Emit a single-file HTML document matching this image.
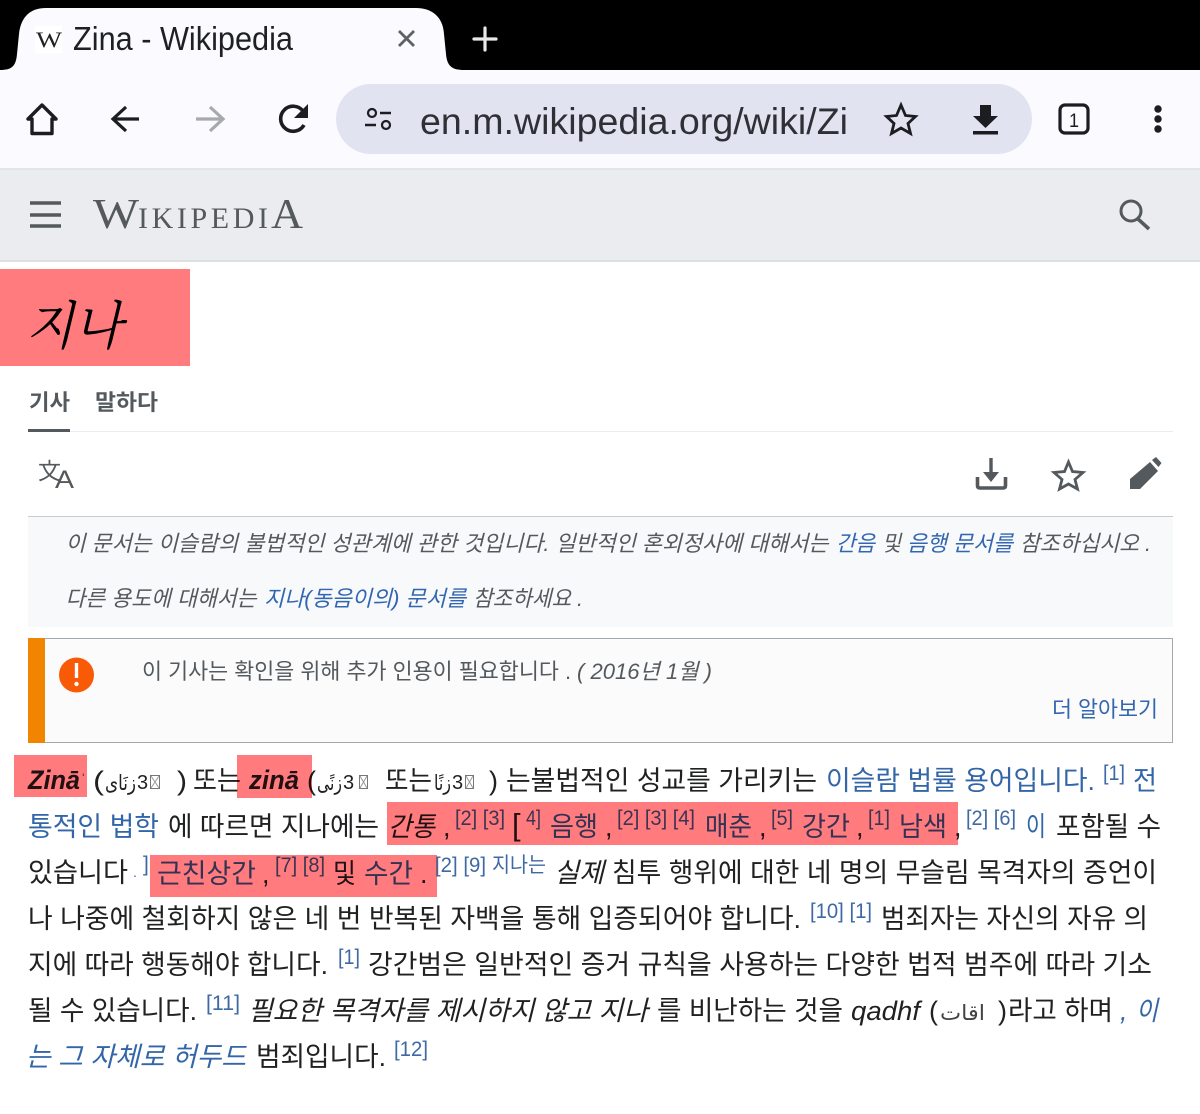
<!DOCTYPE html>
<html lang="ko"><head><meta charset="utf-8"><title>Zina - Wikipedia</title>
<style>
html,body{margin:0;padding:0;background:#fff;width:1200px;height:1114px;overflow:hidden}
svg{position:absolute;left:0;top:0;display:block}
text{font-family:"Liberation Sans","Noto Sans CJK KR","DejaVu Sans",sans-serif;white-space:pre}
.b text{font-size:27px;fill:#202122}
.b .l,.l{fill:#3366a8}
.i{font-style:italic}
.s{font-size:21px!important;fill:#3f69a5!important}
.n text{font-size:22px;fill:#54595d}
.n .l{fill:#3366b0}
.ar{font-family:"DejaVu Sans",sans-serif!important;font-size:21px!important}
</style></head><body>
<svg width="1200" height="1114" viewBox="0 0 1200 1114" xmlns="http://www.w3.org/2000/svg">
<rect width="1200" height="1114" fill="#fff"/>
<!-- browser chrome -->
<rect width="1200" height="70" fill="#000"/>
<rect y="70" width="1200" height="98" fill="#fafaff"/>
<path d="M0 70C12 70 16 66 17 54L19 34C21 16 31 8 46 8H416C431 8 443 16 444 34L446 54C447 66 452 70 464 70Z" fill="#fafaff"/>
<rect x="35" y="26" width="27" height="27" fill="#fff"/>
<text x="36" y="47" font-size="22" textLength="26" lengthAdjust="spacingAndGlyphs" style="font-family:'Liberation Serif',serif" fill="#222">W</text>
<text x="73" y="50" font-size="33" textLength="220" lengthAdjust="spacingAndGlyphs" fill="#1f2024">Zina - Wikipedia</text>
<path d="M399 31L414 46M414 31L399 46" stroke="#5f6165" stroke-width="2.800" fill="none"/>
<path d="M485 28V50M474 39H496" stroke="#e8e8e8" stroke-width="3.200" stroke-linecap="round" fill="none"/>
<!-- toolbar icons -->
<path d="M42 105L28 119H32V133.500H52V119H56Z" fill="none" stroke="#1c1d21" stroke-width="3.400" stroke-linejoin="round"/>
<path d="M139 119H114M126 107L113 119L126 131" fill="none" stroke="#1c1d21" stroke-width="3.200"/>
<path d="M196 119H222M210 107L223 119L210 131" fill="none" stroke="#a8a9ad" stroke-width="3.200"/>
<path d="M304 125A12.500 12.500 0 1 1 303 111" fill="none" stroke="#1c1d21" stroke-width="3.600"/>
<path d="M308 104V118H294Z" fill="#1c1d21"/>
<rect x="336" y="84" width="696" height="70" rx="35" fill="#e1e4f0"/>
<circle cx="372" cy="113" r="4" fill="none" stroke="#1c1d21" stroke-width="2.200"/>
<path d="M380 113H391M365 125H376" stroke="#1c1d21" stroke-width="2.400"/>
<circle cx="386" cy="125" r="4" fill="none" stroke="#1c1d21" stroke-width="2.200"/>
<text x="420" y="134" font-size="37" textLength="428" lengthAdjust="spacingAndGlyphs" fill="#2f3036">en.m.wikipedia.org/wiki/Zi</text>
<path d="M901 105L905.500 115.500L915.500 116.500L908 123.500L910.500 133.500L901 128L891.500 133.500L894 123.500L886.500 116.500L896.500 115.500Z" fill="none" stroke="#1c1d21" stroke-width="2.800" stroke-linejoin="miter"/>
<path d="M980 105H991V116H998L985.500 128L973 116H980Z" fill="#1c1d21"/>
<rect x="973" y="131" width="25" height="3.500" fill="#1c1d21"/>
<rect x="1060" y="105" width="28" height="28" rx="5" fill="none" stroke="#1c1d21" stroke-width="3.200"/>
<text x="1069" y="127" font-size="19" textLength="10" lengthAdjust="spacingAndGlyphs" fill="#1c1d21">1</text>
<circle cx="1158" cy="109" r="3.700" fill="#1c1d21"/><circle cx="1158" cy="119" r="3.700" fill="#1c1d21"/><circle cx="1158" cy="129" r="3.700" fill="#1c1d21"/>
<!-- wiki header -->
<rect y="168" width="1200" height="94" fill="#eaecf0"/>
<rect y="168" width="1200" height="2" fill="#e2e4e8"/>
<rect y="260" width="1200" height="2" fill="#dde0e2"/>
<path d="M30 203H61M30 215H61M30 226H61" stroke="#54595d" stroke-width="3.600" fill="none"/>
<g fill="#54595d">
<text x="93" y="228" style="font-family:'Liberation Serif',serif" font-size="42" textLength="46" lengthAdjust="spacingAndGlyphs">W</text>
<text x="138" y="228" style="font-family:'Liberation Serif',serif" font-size="30" textLength="130" lengthAdjust="spacing">IKIPEDI</text>
<text x="271" y="228" style="font-family:'Liberation Serif',serif" font-size="42" textLength="32" lengthAdjust="spacingAndGlyphs">A</text>
</g>
<circle cx="1131" cy="211" r="10" fill="none" stroke="#54595d" stroke-width="3"/>
<path d="M1138 219L1149 229" stroke="#54595d" stroke-width="3.600"/>
<!-- title and tabs -->
<text x="26" y="344" font-size="52" textLength="96" lengthAdjust="spacingAndGlyphs" fill="#000" style="font-family:'Noto Serif CJK SC','Noto Sans CJK KR',serif;font-style:italic">지나</text>
<text x="29" y="410" font-size="22" font-weight="700" textLength="41" lengthAdjust="spacingAndGlyphs" fill="#54595d">기사</text>
<text x="95" y="410" font-size="22" font-weight="700" textLength="63" lengthAdjust="spacingAndGlyphs" fill="#54595d">말하다</text>
<rect x="28" y="431" width="1145" height="1" fill="#eaecf0"/>
<rect x="28" y="429" width="42" height="3" fill="#54595d"/>
<!-- page action icons -->
<text x="38" y="479" font-size="23" fill="#54595d" style="font-family:'Noto Sans CJK KR',sans-serif">文</text>
<text x="55" y="488" font-size="25" fill="#54595d" textLength="19" lengthAdjust="spacingAndGlyphs">A</text>
<path d="M991 458V476" stroke="#54595d" stroke-width="3.400"/>
<path d="M983 472H999L991 482Z" fill="#54595d"/>
<path d="M977.500 477V485.500Q977.500 488 980 488H1003Q1005.500 488 1005.500 485.500V477" fill="none" stroke="#54595d" stroke-width="3.600"/>
<path d="M1068.500 462L1072.500 471.500L1083 472.500L1075 479.500L1077.500 489L1068.500 484L1059.500 489L1062 479.500L1054 472.500L1064.500 471.500Z" fill="none" stroke="#54595d" stroke-width="2.800"/>
<path d="M1130 489V479L1150 462L1158 471L1140 489Z" fill="#54595d"/>
<path d="M1152 460L1156 457L1161.500 463L1158.500 467Z" fill="#54595d"/>
<!-- hatnote -->
<rect x="28" y="516" width="1145" height="111" fill="#f8f9fa"/>
<rect x="28" y="516" width="1145" height="1" fill="#c8ccd1"/>
<g class="n">
<text class="i" x="65.500" y="551" textLength="763" lengthAdjust="spacingAndGlyphs">이 문서는 이슬람의 불법적인 성관계에 관한 것입니다. 일반적인 혼외정사에 대해서는</text>
<text class="i l" x="836" y="551" textLength="39" lengthAdjust="spacingAndGlyphs">간음</text>
<text class="i" x="882" y="551" textLength="19" lengthAdjust="spacingAndGlyphs">및</text>
<text class="i l" x="907" y="551" textLength="106" lengthAdjust="spacingAndGlyphs">음행 문서를</text>
<text class="i" x="1020" y="551" textLength="131" lengthAdjust="spacingAndGlyphs">참조하십시오 .</text>
<text class="i" x="65.500" y="606" textLength="191" lengthAdjust="spacingAndGlyphs">다른 용도에 대해서는</text>
<text class="i l" x="264" y="606" textLength="202" lengthAdjust="spacingAndGlyphs">지나(동음이의) 문서를</text>
<text class="i" x="473" y="606" textLength="110" lengthAdjust="spacingAndGlyphs">참조하세요 .</text>
</g>
<!-- ambox -->
<rect x="28.500" y="638.500" width="1144" height="104" fill="#fbfbfb" stroke="#a2a9b1"/>
<rect x="28" y="638" width="17" height="105" fill="#f28500"/>
<ellipse cx="76.500" cy="675" rx="17.500" ry="17.500" fill="#f95a06"/>
<path d="M76.500 663V678" stroke="#fff" stroke-width="3.400"/>
<circle cx="76.500" cy="684" r="2.200" fill="#fff"/>
<g class="n">
<text x="142" y="679" textLength="429" lengthAdjust="spacingAndGlyphs">이 기사는 확인을 위해 추가 인용이 필요합니다 .</text>
<text class="i" x="577" y="679" textLength="135" lengthAdjust="spacingAndGlyphs">( 2016년 1월 )</text>
<text class="l" x="1052" y="717" textLength="106" lengthAdjust="spacingAndGlyphs">더 알아보기</text>
</g>
<!-- body -->
<g class="b">
<!-- line 1 -->
<text class="i" x="28" y="789" textLength="52" lengthAdjust="spacingAndGlyphs" style="font-weight:700">Zinā</text>
<text x="81" y="784" style="font-size:14px">ʾ</text>
<text x="93" y="790" textLength="11" lengthAdjust="spacingAndGlyphs">(</text>
<text class="ar" x="105" y="790" textLength="31" lengthAdjust="spacingAndGlyphs">زنَاى</text>
<text x="137" y="789" style="font-size:20px">3</text>
<rect x="150.500" y="775.500" width="9" height="13" fill="none" stroke="#777"/><path d="M151 776L159 788M159 776L151 788" stroke="#999"/>
<text x="177" y="790" textLength="10" lengthAdjust="spacingAndGlyphs">)</text>
<text x="193" y="790" textLength="48" lengthAdjust="spacingAndGlyphs">또는</text>
<text class="i" x="249" y="789" textLength="50" lengthAdjust="spacingAndGlyphs" style="font-weight:700">zinā</text>
<text x="307" y="790" textLength="9" lengthAdjust="spacingAndGlyphs">(</text>
<text class="ar" x="317" y="790" textLength="25" lengthAdjust="spacingAndGlyphs">زنًى</text>
<text x="343" y="789" style="font-size:20px">3</text>
<rect x="359.500" y="775.500" width="8" height="13" fill="none" stroke="#777"/><path d="M360 776L367 788M367 776L360 788" stroke="#999"/>
<text x="385" y="790" textLength="47" lengthAdjust="spacingAndGlyphs">또는</text>
<text class="ar" x="434" y="790" textLength="17" lengthAdjust="spacingAndGlyphs">زنًا</text>
<text x="452" y="789" style="font-size:20px">3</text>
<rect x="465.500" y="775.500" width="8" height="13" fill="none" stroke="#777"/><path d="M466 776L473 788M473 776L466 788" stroke="#999"/>
<text x="489" y="790" textLength="9" lengthAdjust="spacingAndGlyphs">)</text>
<text x="506" y="790" textLength="311" lengthAdjust="spacingAndGlyphs">는불법적인 성교를 가리키는</text>
<text class="l" x="826" y="790" textLength="269" lengthAdjust="spacingAndGlyphs">이슬람 법률 용어입니다.</text>
<text class="s" x="1103" y="780" textLength="22" lengthAdjust="spacingAndGlyphs">[1]</text>
<text class="l" x="1133" y="790" textLength="24" lengthAdjust="spacingAndGlyphs">전</text>
<!-- line 2 -->
<text class="l" x="28" y="836" textLength="131" lengthAdjust="spacingAndGlyphs">통적인 법학</text>
<text x="168" y="836" textLength="211" lengthAdjust="spacingAndGlyphs">에 따르면 지나에는</text>
<text class="i" x="388" y="836" textLength="47" lengthAdjust="spacingAndGlyphs">간통</text>
<text x="443" y="836">,</text>
<text class="s" x="455" y="825" textLength="50" lengthAdjust="spacingAndGlyphs">[2] [3]</text>
<text x="512" y="835" style="font-size:31px">[</text>
<text class="s" x="526" y="825" textLength="15" lengthAdjust="spacingAndGlyphs">4]</text>
<text class="l" x="550" y="836" textLength="48" lengthAdjust="spacingAndGlyphs">음행</text>
<text x="605" y="836">,</text>
<text class="s" x="617" y="825" textLength="78" lengthAdjust="spacingAndGlyphs">[2] [3] [4]</text>
<text class="l" x="705" y="836" textLength="47" lengthAdjust="spacingAndGlyphs">매춘</text>
<text x="759" y="836">,</text>
<text class="s" x="771" y="825" textLength="22" lengthAdjust="spacingAndGlyphs">[5]</text>
<text class="l" x="802" y="836" textLength="48" lengthAdjust="spacingAndGlyphs">강간</text>
<text x="856" y="836">,</text>
<text class="s" x="868" y="825" textLength="22" lengthAdjust="spacingAndGlyphs">[1]</text>
<text class="l" x="899" y="836" textLength="48" lengthAdjust="spacingAndGlyphs">남색</text>
<text x="954" y="836">,</text>
<text class="s" x="966" y="825" textLength="50" lengthAdjust="spacingAndGlyphs">[2] [6]</text>
<text class="l" x="1026" y="836" textLength="20" lengthAdjust="spacingAndGlyphs">이</text>
<text x="1056" y="836" textLength="105" lengthAdjust="spacingAndGlyphs">포함될 수</text>
<!-- line 3 -->
<text x="28" y="882" textLength="100" lengthAdjust="spacingAndGlyphs">있습니다</text>
<text class="s" x="133" y="877" style="font-size:14px!important">.</text>
<text class="s" x="143" y="871">]</text>
<text class="l" x="157" y="883" textLength="99" lengthAdjust="spacingAndGlyphs">근친상간</text>
<text x="262" y="883">,</text>
<text class="s" x="275" y="872" textLength="50" lengthAdjust="spacingAndGlyphs">[7] [8]</text>
<text x="333" y="883" textLength="23" lengthAdjust="spacingAndGlyphs">및</text>
<text class="l" x="364" y="883" textLength="49" lengthAdjust="spacingAndGlyphs">수간</text>
<text x="420" y="883">.</text>
<text class="s" x="435" y="872" textLength="51" lengthAdjust="spacingAndGlyphs">[2] [9]</text>
<text class="s" x="492" y="872" textLength="54" lengthAdjust="spacingAndGlyphs">지나는</text>
<text class="i" x="554" y="882" textLength="50" lengthAdjust="spacingAndGlyphs">실제</text>
<text x="612" y="882" textLength="545" lengthAdjust="spacingAndGlyphs">침투 행위에 대한 네 명의 무슬림 목격자의 증언이</text>
<!-- line 4 -->
<text x="28" y="928" textLength="773" lengthAdjust="spacingAndGlyphs">나 나중에 철회하지 않은 네 번 반복된 자백을 통해 입증되어야 합니다.</text>
<text class="s" x="810" y="918" textLength="62" lengthAdjust="spacingAndGlyphs">[10] [1]</text>
<text x="881" y="928" textLength="267" lengthAdjust="spacingAndGlyphs">범죄자는 자신의 자유 의</text>
<!-- line 5 -->
<text x="28" y="974" textLength="300" lengthAdjust="spacingAndGlyphs">지에 따라 행동해야 합니다.</text>
<text class="s" x="338" y="964" textLength="22" lengthAdjust="spacingAndGlyphs">[1]</text>
<text x="368" y="974" textLength="784" lengthAdjust="spacingAndGlyphs">강간범은 일반적인 증거 규칙을 사용하는 다양한 법적 범주에 따라 기소</text>
<!-- line 6 -->
<text x="28" y="1020" textLength="169" lengthAdjust="spacingAndGlyphs">될 수 있습니다.</text>
<text class="s" x="206" y="1010" textLength="34" lengthAdjust="spacingAndGlyphs">[11]</text>
<text class="i" x="248" y="1020" textLength="400" lengthAdjust="spacingAndGlyphs">필요한 목격자를 제시하지 않고 지나</text>
<text x="657" y="1020" textLength="186" lengthAdjust="spacingAndGlyphs">를 비난하는 것을</text>
<text class="i" x="851" y="1020" textLength="69" lengthAdjust="spacingAndGlyphs">qadhf</text>
<text x="929" y="1020" textLength="9" lengthAdjust="spacingAndGlyphs">(</text>
<text class="ar" x="940" y="1020" style="fill:#444" textLength="45" lengthAdjust="spacingAndGlyphs">اقات</text>
<text x="998" y="1020" textLength="9" lengthAdjust="spacingAndGlyphs">)</text>
<text x="1008" y="1020" textLength="105" lengthAdjust="spacingAndGlyphs">라고 하며</text>
<text class="i l" x="1120" y="1020">,</text>
<text class="i l" x="1136" y="1020" textLength="22" lengthAdjust="spacingAndGlyphs">이</text>
<!-- line 7 -->
<text class="i l" x="26" y="1066" textLength="220" lengthAdjust="spacingAndGlyphs">는 그 자체로 허두드</text>
<text x="256" y="1066" textLength="130" lengthAdjust="spacingAndGlyphs">범죄입니다.</text>
<text class="s" x="394" y="1056" textLength="34" lengthAdjust="spacingAndGlyphs">[12]</text>
</g>
<!-- highlights -->
<g fill="#ff7b7e" style="mix-blend-mode:multiply">
<rect x="0" y="269" width="190" height="97"/>
<rect x="14" y="755" width="73" height="42"/>
<rect x="237" y="755" width="75" height="43"/>
<rect x="387" y="802" width="571" height="43"/>
<rect x="150" y="855" width="287" height="42"/>
</g>
</svg>
</body></html>
